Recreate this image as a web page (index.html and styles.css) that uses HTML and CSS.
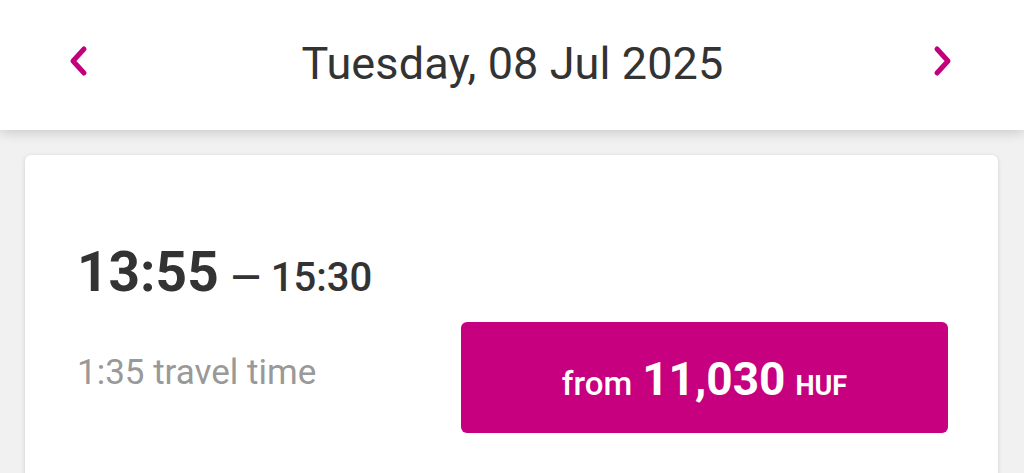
FILE: index.html
```html
<!DOCTYPE html>
<html lang="en">
<head>
<meta charset="utf-8">
<title>Flight search</title>
<link rel="stylesheet" href="styles.css">
</head>
<body>
<header class="date-bar">
  <button class="nav-btn" aria-label="Previous day">
    <svg width="24" height="34" viewBox="0 0 24 34"><path d="M18 5 L7 17 L18 29" fill="none" stroke="#c3007c" stroke-width="5" stroke-linecap="round" stroke-linejoin="round"/></svg>
  </button>
  <h1 class="date">Tuesday, 08 Jul 2025</h1>
  <button class="nav-btn" aria-label="Next day">
    <svg width="24" height="34" viewBox="0 0 24 34"><path d="M6 5 L17 17 L6 29" fill="none" stroke="#c3007c" stroke-width="5" stroke-linecap="round" stroke-linejoin="round"/></svg>
  </button>
</header>
<main class="content">
  <section class="flight-card">
    <div class="times">
      <span class="dep">13:55</span>
      <span class="dash">—</span>
      <span class="arr">15:30</span>
    </div>
    <div class="bottom-row">
      <span class="duration">1:35 travel time</span>
      <button class="price-btn">
        <span class="from">from</span>
        <span class="amount">11,030</span>
        <span class="cur">HUF</span>
      </button>
    </div>
  </section>
</main>
</body>
</html>
```
FILE: styles.css
```css
* { box-sizing: border-box; }
html, body {
  margin: 0;
  padding: 0;
  background: #f1f1f1;
  font-family: Roboto, "Liberation Sans", Arial, sans-serif;
  overflow: hidden;
}
.date-bar {
  height: 130px;
  background: #fff;
  display: flex;
  align-items: center;
  justify-content: space-between;
  padding: 0 69px 0 66px;
  box-shadow: 0 2px 12px rgba(0,0,0,0.18);
  position: relative;
  z-index: 1;
}
.nav-btn {
  background: none;
  border: 0;
  padding: 0;
  width: 24px;
  height: 34px;
  display: flex;
  margin-top: -8px;
}
.date {
  margin: 0 0 4px 4px;
  font-size: 45px;
  font-weight: 400;
  color: #333;
  letter-spacing: 0.1px;
}
.content {
  padding: 25px 26px 0 25px;
}
.flight-card {
  background: #fff;
  border-radius: 6px;
  box-shadow: 0 1px 4px rgba(0,0,0,0.15);
  padding: 90px 50px 60px 52px;
}
.times {
  display: flex;
  align-items: baseline;
  color: #333;
  line-height: 1;
}
.dep {
  font-size: 55px;
  font-weight: 700;
}
.dash {
  font-size: 39px;
  margin: 0 10px 0 12px;
  font-weight: 500;
}
.arr {
  font-size: 40px;
  font-weight: 500;
}
.bottom-row {
  display: flex;
  align-items: center;
  justify-content: space-between;
  margin-top: 22px;
}
.duration {
  font-size: 35px;
  color: #999;
  margin-top: -10px;
}
.price-btn {
  width: 487px;
  height: 111px;
  background: #c6007e;
  border: 0;
  border-radius: 6px;
  color: #fff;
  font-family: inherit;
  display: flex;
  align-items: baseline;
  justify-content: center;
  padding: 34px 0 0;
  line-height: 1;
}
.from { font-size: 33px; font-weight: 500; margin-right: 10px; }
.amount { font-size: 46px; font-weight: 700; margin-right: 10px; }
.cur { font-size: 27px; font-weight: 700; }
```
